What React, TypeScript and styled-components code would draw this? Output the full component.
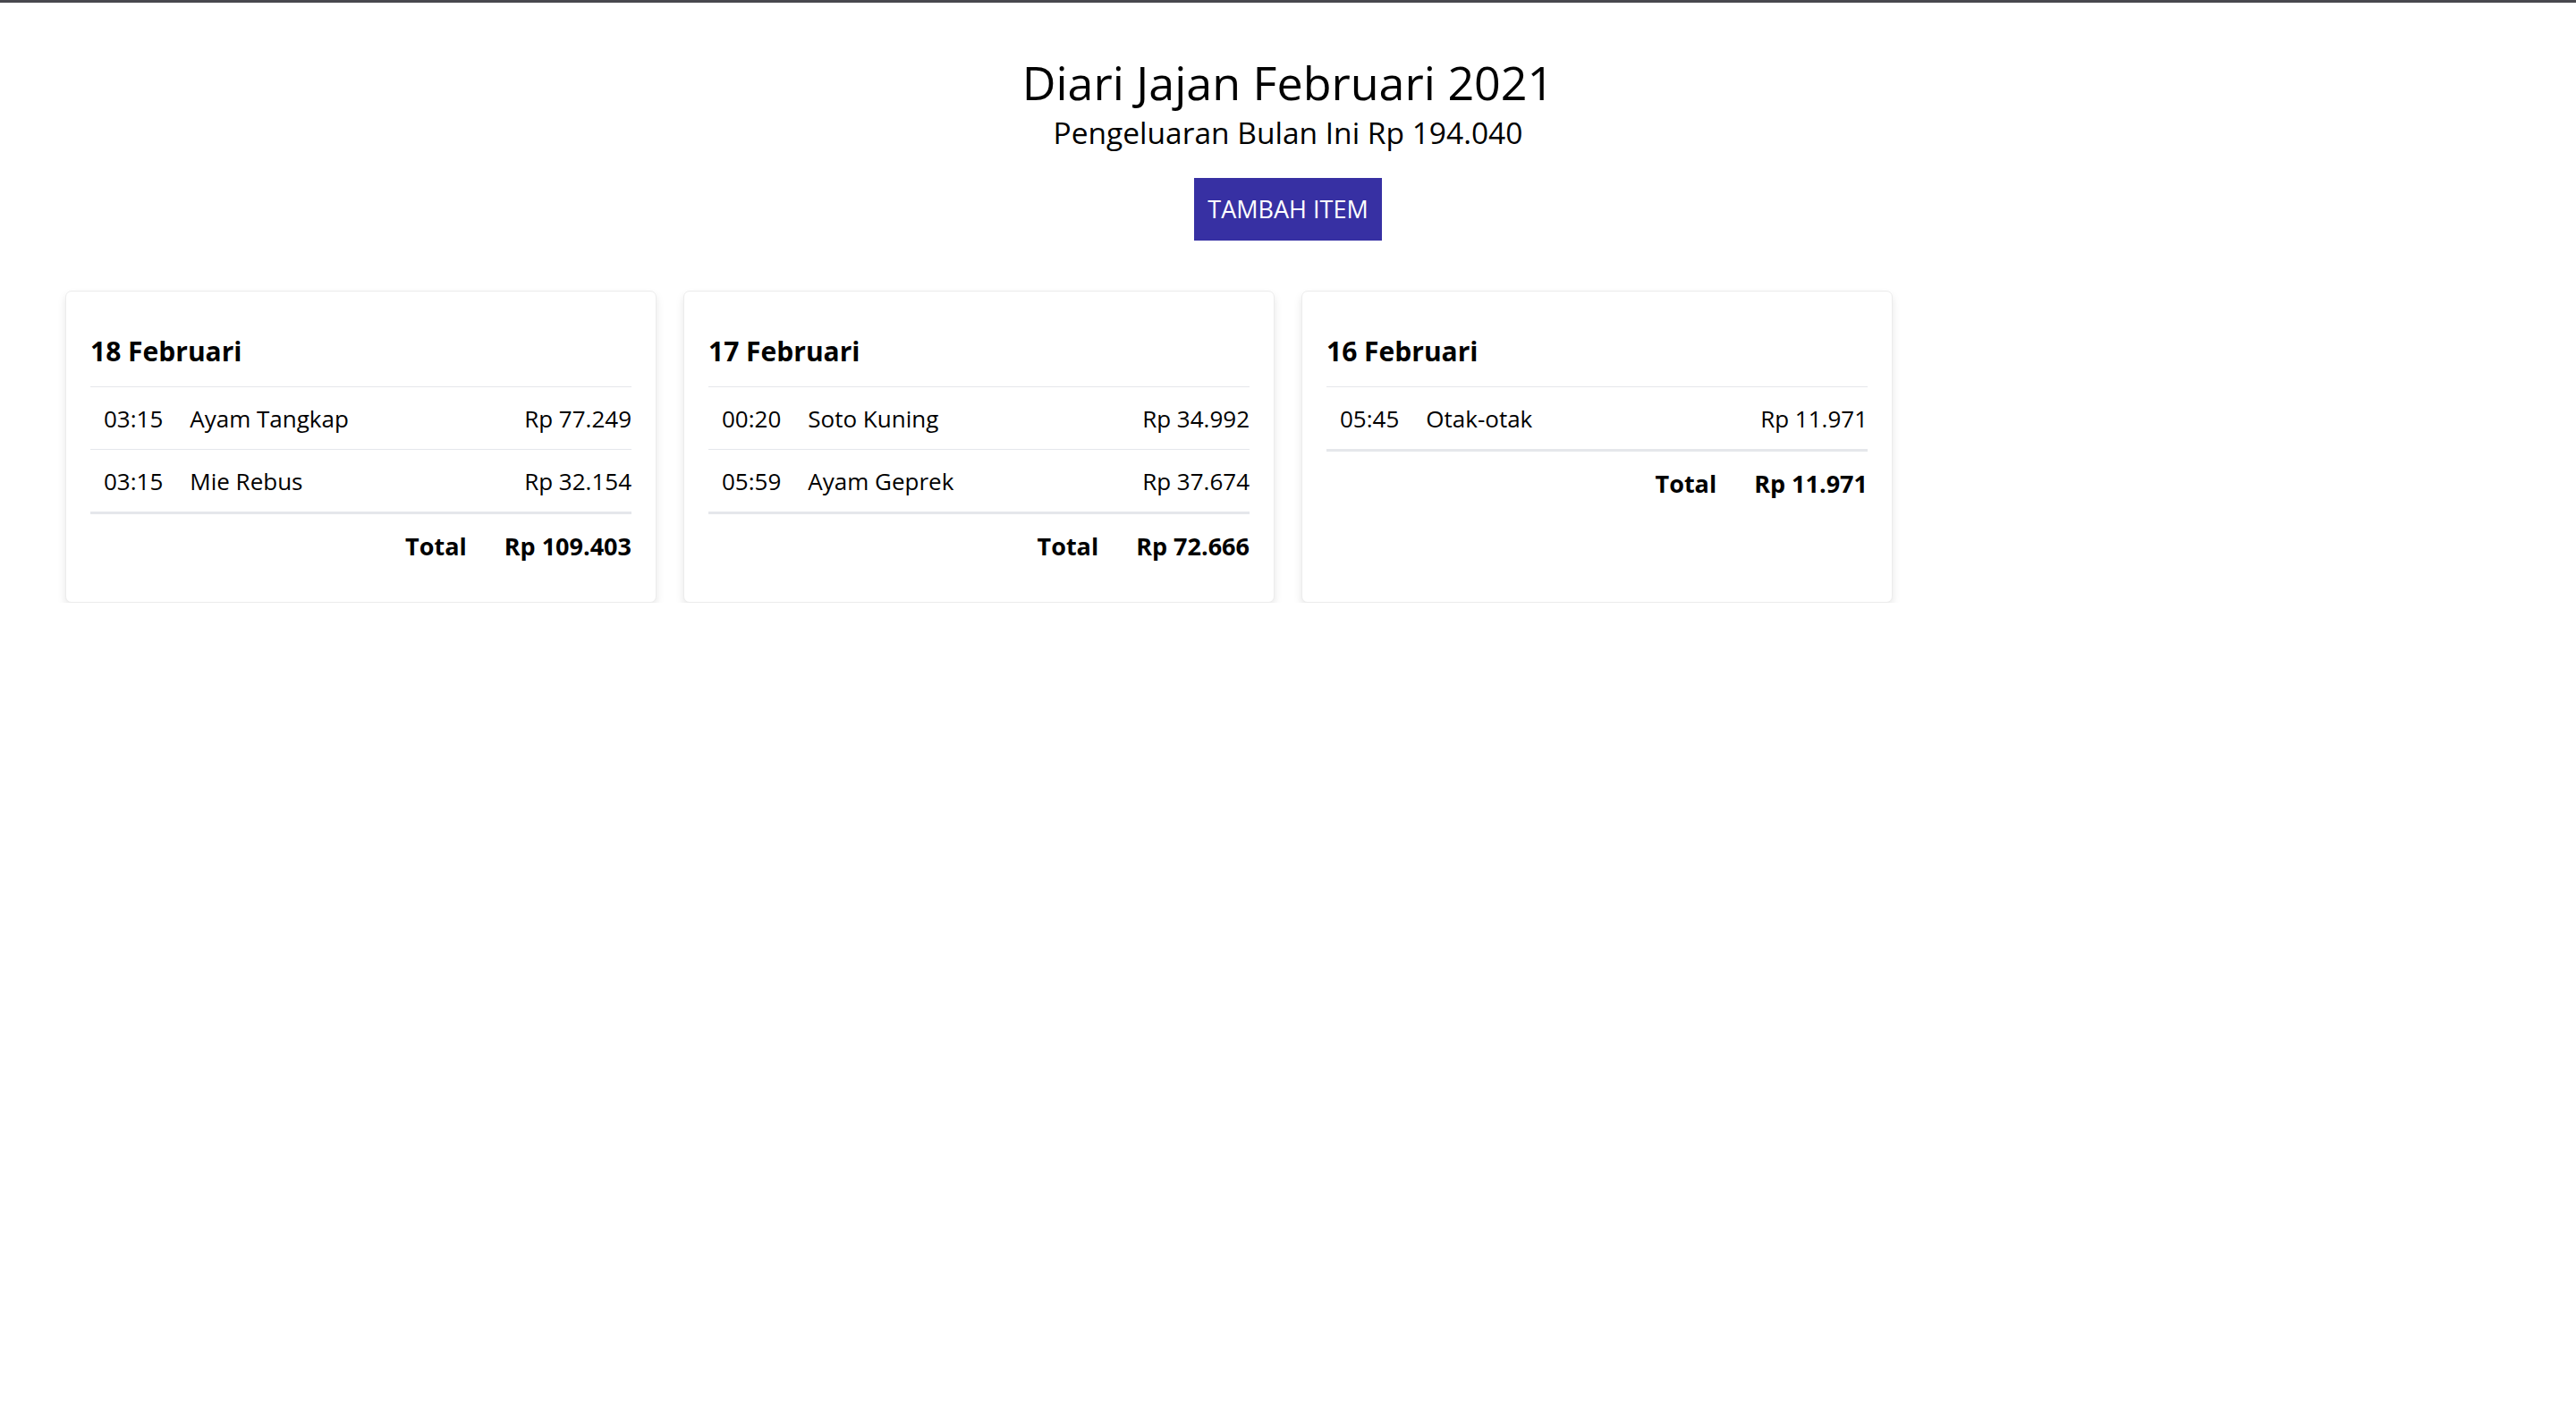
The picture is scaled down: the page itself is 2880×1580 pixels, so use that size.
import React from "react";
import styled, { createGlobalStyle } from "styled-components";

const GlobalStyle = createGlobalStyle`
  html, body {
    margin: 0;
    padding: 0;
    background: #ffffff;
  }
  body {
    font-family: "Open Sans", "Noto Sans", sans-serif;
    color: #000000;
  }
  * { box-sizing: border-box; }
`;

const TopBar = styled.div`
  height: 3px;
  background: #48484e;
`;

const Page = styled.main`
  display: flex;
  flex-direction: column;
`;

const Header = styled.header`
  display: flex;
  flex-direction: column;
  align-items: center;
  padding-top: 57px;
`;

const Title = styled.h1`
  margin: 0;
  font-size: 52px;
  line-height: 64px;
  font-weight: 400;
`;

const Subtitle = styled.h2`
  margin: 4px 0 0;
  font-size: 33.5px;
  line-height: 40px;
  font-weight: 400;
`;

const AddButton = styled.button`
  margin-top: 31px;
  height: 70px;
  padding: 0 15px;
  border: none;
  border-radius: 0;
  background: #3730a3;
  color: #ffffff;
  font-family: "Open Sans", "Noto Sans", sans-serif;
  font-size: 27px;
  line-height: 70px;
  font-weight: 400;
  text-transform: uppercase;
  cursor: pointer;
`;

const Grid = styled.section`
  display: grid;
  grid-template-columns: repeat(4, 1fr);
  gap: 30px;
  padding: 0 73px;
  margin-top: 56px;
`;

const Card = styled.article`
  background: #ffffff;
  border: 1px solid #ececec;
  border-radius: 7px;
  box-shadow: 0 5px 10px rgba(0, 0, 0, 0.1);
  padding: 27px 27px 28px;
`;

const DayTitle = styled.h3`
  margin: 20px 0 19px;
  font-size: 30px;
  line-height: 40px;
  font-weight: 700;
`;

const Row = styled.div`
  display: flex;
  align-items: center;
  border-top: 1px solid #e5e7eb;
  padding: 20px 0 19px;
  font-size: 26px;
  line-height: 30px;
`;

const Time = styled.span`
  padding: 0 15px;
`;

const Name = styled.span`
  flex: 1;
  padding-left: 15px;
`;

const Amount = styled.span`
  text-align: right;
`;

const TotalRow = styled.div`
  display: flex;
  justify-content: flex-end;
  align-items: center;
  gap: 42px;
  border-top: 3px solid #e5e7eb;
  padding: 21px 0 19px;
  font-size: 27px;
  line-height: 30px;
  font-weight: 700;
`;

type Item = { time: string; name: string; amount: string };
type Day = { date: string; items: Item[]; total: string };

const days: Day[] = [
  {
    date: "18 Februari",
    items: [
      { time: "03:15", name: "Ayam Tangkap", amount: "Rp 77.249" },
      { time: "03:15", name: "Mie Rebus", amount: "Rp 32.154" },
    ],
    total: "Rp 109.403",
  },
  {
    date: "17 Februari",
    items: [
      { time: "00:20", name: "Soto Kuning", amount: "Rp 34.992" },
      { time: "05:59", name: "Ayam Geprek", amount: "Rp 37.674" },
    ],
    total: "Rp 72.666",
  },
  {
    date: "16 Februari",
    items: [{ time: "05:45", name: "Otak-otak", amount: "Rp 11.971" }],
    total: "Rp 11.971",
  },
];

export default function App() {
  return (
    <>
      <GlobalStyle />
      <TopBar />
      <Page>
        <Header>
          <Title>Diari Jajan Februari 2021</Title>
          <Subtitle>Pengeluaran Bulan Ini Rp 194.040</Subtitle>
          <AddButton>Tambah Item</AddButton>
        </Header>
        <Grid>
          {days.map((d) => (
            <Card key={d.date}>
              <DayTitle>{d.date}</DayTitle>
              {d.items.map((it, i) => (
                <Row key={i}>
                  <Time>{it.time}</Time>
                  <Name>{it.name}</Name>
                  <Amount>{it.amount}</Amount>
                </Row>
              ))}
              <TotalRow>
                <span>Total</span>
                <span>{d.total}</span>
              </TotalRow>
            </Card>
          ))}
        </Grid>
      </Page>
    </>
  );
}
